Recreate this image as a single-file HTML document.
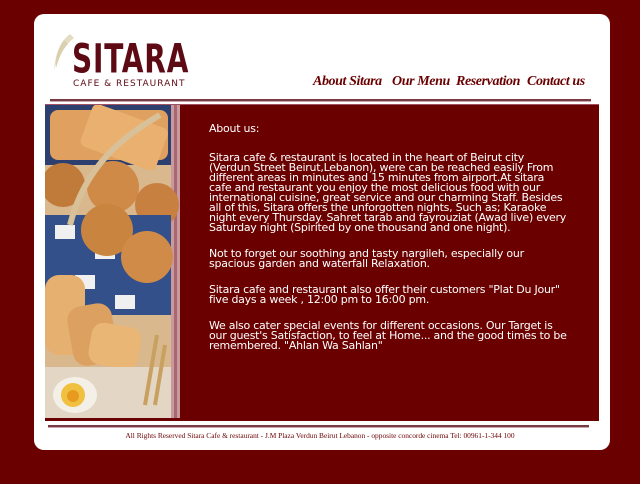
<!DOCTYPE html>
<html><head><meta charset="utf-8">
<style>
html,body{margin:0;padding:0;}
body{width:640px;height:484px;background:#6b0000;position:relative;overflow:hidden;font-family:"DejaVu Sans","Liberation Sans",sans-serif;}
.card{position:absolute;left:34px;top:14px;width:576px;height:436px;background:#fff;border-radius:10px;}
.logo{position:absolute;left:72px;top:38px;font-family:"DejaVu Sans Condensed","Liberation Sans",sans-serif;font-weight:bold;font-size:38px;color:#5e0a14;letter-spacing:1px;line-height:40px;transform-origin:0 0;transform:scale(0.82,1.05);}
.sub{position:absolute;left:73px;top:79px;font-size:9px;color:#5e0a14;letter-spacing:1px;font-family:"DejaVu Sans","Liberation Sans",sans-serif;}
.swoosh{position:absolute;left:50px;top:32px;}
.nav{position:absolute;top:74px;font-family:"Liberation Serif",serif;font-style:italic;font-weight:bold;font-size:14px;color:#6b0000;letter-spacing:-0.4px;}
.line{position:absolute;height:2px;background:#7a3a44;border-bottom:1px solid #c8a8ae;}
.panel{position:absolute;left:45px;top:104px;width:554px;height:316px;background:#6b0000;border-top:1px solid #a05060;}
.txt{position:absolute;left:209px;color:#fff;font-size:11px;line-height:10px;white-space:nowrap;letter-spacing:-0.25px;}
.foot{position:absolute;left:0;width:640px;top:431px;text-align:center;font-family:"Liberation Serif",serif;font-size:7.4px;color:#6b0000;}
</style></head><body>
<div class="card"></div>
<svg class="swoosh" width="30" height="50" viewBox="0 0 30 50"><path d="M20 2 C10 10 6 20 4 38 C8 24 14 14 24 6Z" fill="#e3dcc0"/><path d="M14 8 C8 16 5 26 6 36 C9 26 12 18 18 12Z" fill="#d8d0ae"/></svg>
<div class="logo">SITARA</div>
<div class="sub">CAFE &amp; RESTAURANT</div>
<div class="nav" style="left:313px">About Sitara</div>
<div class="nav" style="left:392px">Our Menu</div>
<div class="nav" style="left:456px">Reservation</div>
<div class="nav" style="left:527px">Contact us</div>
<div class="line" style="left:50px;top:99px;width:541px"></div>
<div class="panel"></div>
<svg style="position:absolute;left:45px;top:105px" width="135" height="313" viewBox="0 0 135 313">
<rect width="126" height="313" fill="#d9b88e"/>
<rect x="126" width="9" height="313" fill="#c89aa0"/>
<rect x="129" width="3" height="313" fill="#a86870"/>
<rect x="0" y="0" width="126" height="60" fill="#2d3f6e"/>
<rect x="5" y="5" width="118" height="50" rx="8" fill="#e0a060"/>
<rect x="40" y="10" width="80" height="45" rx="6" fill="#eab070" transform="rotate(20 80 30)"/>
<circle cx="18" cy="80" r="22" fill="#c07a3a"/>
<circle cx="68" cy="82" r="26" fill="#d08a48"/>
<circle cx="112" cy="100" r="22" fill="#c88040"/>
<rect x="0" y="110" width="126" height="100" fill="#34508a"/>
<rect x="10" y="120" width="20" height="14" fill="#f0f0f0"/><rect x="50" y="140" width="20" height="14" fill="#f0f0f0"/><rect x="90" y="160" width="20" height="14" fill="#f0f0f0"/><rect x="30" y="170" width="20" height="14" fill="#f0f0f0"/><rect x="70" y="190" width="20" height="14" fill="#f0f0f0"/>
<circle cx="62" cy="125" r="26" fill="#c98540"/>
<circle cx="102" cy="152" r="26" fill="#d08b48"/>
<path d="M25 120 C40 60 80 30 115 10" stroke="#d8c098" stroke-width="6" fill="none"/>
<rect x="0" y="170" width="40" height="80" rx="14" fill="#e6b070"/>
<rect x="25" y="200" width="45" height="60" rx="14" fill="#dca060" transform="rotate(-10 45 230)"/>
<rect x="45" y="220" width="50" height="42" rx="12" fill="#eab676" transform="rotate(10 70 240)"/>
<rect x="0" y="262" width="126" height="51" fill="#e4d6c4"/>
<ellipse cx="30" cy="290" rx="22" ry="18" fill="#f4f0e8"/>
<circle cx="28" cy="290" r="12" fill="#f0c040"/><circle cx="28" cy="291" r="6" fill="#e89a20"/>
<path d="M100 300 L112 230 M110 300 L120 240" stroke="#c8a060" stroke-width="4"/>
</svg>
<div class="txt" style="top:124px">About us:</div>
<div class="txt" style="top:153px">Sitara cafe &amp; restaurant is located in the heart of Beirut city<br>(Verdun Street Beirut,Lebanon), were can be reached easily From<br>different areas in minutes and 15 minutes from airport.At sitara<br>cafe and restaurant you enjoy the most delicious food with our<br>international cuisine, great service and our charming Staff. Besides<br>all of this, Sitara offers the unforgotten nights, Such as; Karaoke<br>night every Thursday. Sahret tarab and fayrouziat (Awad live) every<br>Saturday night (Spirited by one thousand and one night).</div>
<div class="txt" style="top:249px">Not to forget our soothing and tasty nargileh, especially our<br>spacious garden and waterfall Relaxation.</div>
<div class="txt" style="top:285px">Sitara cafe and restaurant also offer their customers "Plat Du Jour"<br>five days a week , 12:00 pm to 16:00 pm.</div>
<div class="txt" style="top:321px">We also cater special events for different occasions. Our Target is<br>our guest's Satisfaction, to feel at Home... and the good times to be<br>remembered. "Ahlan Wa Sahlan"</div>
<div class="line" style="left:48px;top:425px;width:541px"></div>
<div class="foot">All Rights Reserved Sitara Cafe &amp; restaurant - J.M Plaza Verdun Beirut Lebanon - opposite concorde cinema Tel: 00961-1-344 100</div>
</body></html>
